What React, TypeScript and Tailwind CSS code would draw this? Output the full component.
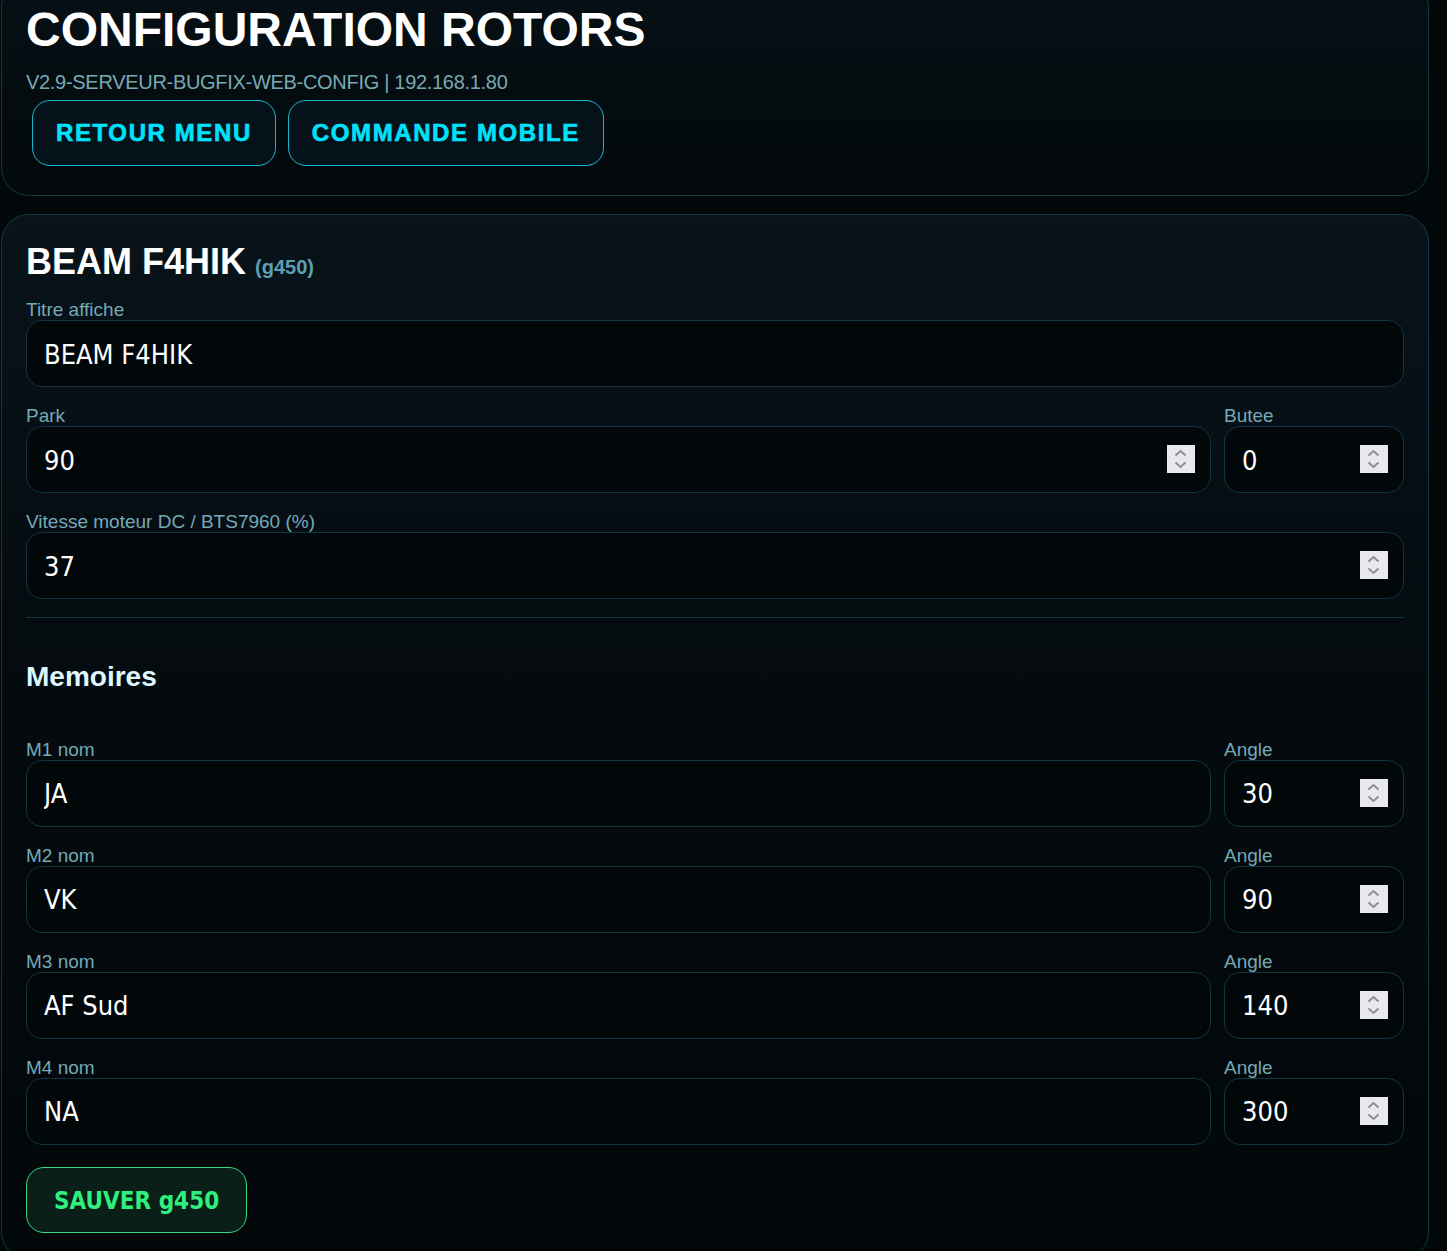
import React from "react";

const labelCls =
  "block h-[22px] text-[19px] leading-[26px] mb-[1px] text-[#74a9b7] font-['Liberation_Sans',Arial,sans-serif]";

function Spinner() {
  return (
    <svg width="28" height="28" viewBox="0 0 28 28" className="mr-[15px] shrink-0">
      <rect width="28" height="28" fill="#e9e8ee" />
      <path d="M8.5 10.5 L13.5 6 L18.5 10.5" stroke="#8e8c98" strokeWidth="2" fill="none" />
      <path d="M8.5 17.5 L13.5 22 L18.5 17.5" stroke="#8e8c98" strokeWidth="2" fill="none" />
    </svg>
  );
}

function Field({
  label,
  value,
  number,
  className = "",
}: {
  label: string;
  value: string;
  number?: boolean;
  className?: string;
}) {
  return (
    <label className={"block " + className}>
      <span className={labelCls}>{label}</span>
      <div className="flex h-[67px] items-center rounded-[16px] border border-[#0f3641] bg-[#02070a]">
        <input
          className="min-w-0 flex-1 bg-transparent pl-[17px] pt-[3px] text-[27px] text-white outline-none font-['DejaVu_Sans_Condensed','DejaVu_Sans',sans-serif]"
          defaultValue={value}
        />
        {number && <Spinner />}
      </div>
    </label>
  );
}

function Row({ name, angle, label }: { name: string; angle: string; label: string }) {
  return (
    <div className="flex gap-[13px]">
      <Field label={label} value={name} className="flex-1" />
      <Field label="Angle" value={angle} number className="w-[180px]" />
    </div>
  );
}

export default function App() {
  const memoires = [
    { label: "M1 nom", name: "JA", angle: "30" },
    { label: "M2 nom", name: "VK", angle: "90" },
    { label: "M3 nom", name: "AF Sud", angle: "140" },
    { label: "M4 nom", name: "NA", angle: "300" },
  ];

  return (
    <div className="min-h-screen bg-[#02070a] pb-10 font-['Liberation_Sans',Arial,sans-serif]">
      <div className="-mt-[21px] ml-[1px] w-[1428px]">
        <div className="rounded-[28px] border border-[#103a44] bg-gradient-to-b from-[#061015] to-[#03090c] px-[24px] pb-[29px] pt-[24px]">
          <h1 className="text-[48px] font-bold leading-[1.1] text-white">CONFIGURATION ROTORS</h1>
          <div className="mt-[13px] text-[20px] leading-[24px] tracking-[-0.3px] text-[#78a9b4]">
            V2.9-SERVEUR-BUGFIX-WEB-CONFIG | 192.168.1.80
          </div>
          <div className="ml-[6px] mt-[6px] flex gap-[12px]">
            {["RETOUR MENU", "COMMANDE MOBILE"].map((t) => (
              <button
                key={t}
                className="h-[66px] rounded-[18px] border border-[#18b8cf] bg-[#06121a] px-[23px] text-[24px] font-bold tracking-[1.6px] text-[#00e1fb] [-webkit-text-stroke:0.6px_#00e1fb]"
              >
                {t}
              </button>
            ))}
          </div>
        </div>

        <div className="mt-[18px] rounded-[28px] border border-[#103a44] bg-gradient-to-b from-[#08131a] via-[#040a0e] to-[#02070a] px-[24px] pb-[26px] pt-[25px]">
          <h2 className="flex items-baseline text-[36px] font-bold leading-[1.2] text-white">
            BEAM F4HIK
            <span className="ml-[9px] text-[20px] font-bold text-[#5f9fb2]">(g450)</span>
          </h2>

          <div className="mt-[14px] flex flex-col gap-[16px]">
            <Field label="Titre affiche" value="BEAM F4HIK" />
            <div className="flex gap-[13px]">
              <Field label="Park" value="90" number className="flex-1" />
              <Field label="Butee" value="0" number className="w-[180px]" />
            </div>
            <Field label="Vitesse moteur DC / BTS7960 (%)" value="37" number />
          </div>

          <div className="mt-[18px] h-px bg-[#0f3741]" />

          <h3 className="mt-[42px] text-[28px] font-bold leading-[1.2] text-[#dff7ff]">Memoires</h3>

          <div className="mt-[43px] flex flex-col gap-[16px]">
            {memoires.map((m) => (
              <Row key={m.label} label={m.label} name={m.name} angle={m.angle} />
            ))}
          </div>

          <button className="mt-[22px] h-[66px] rounded-[18px] border border-[#3ad97f] bg-[#0a1f17] px-[27px] pt-[2px] text-[24px] font-bold text-[#2ff07f] font-['DejaVu_Sans_Condensed','DejaVu_Sans',sans-serif]">
            SAUVER g450
          </button>
        </div>
      </div>
    </div>
  );
}
